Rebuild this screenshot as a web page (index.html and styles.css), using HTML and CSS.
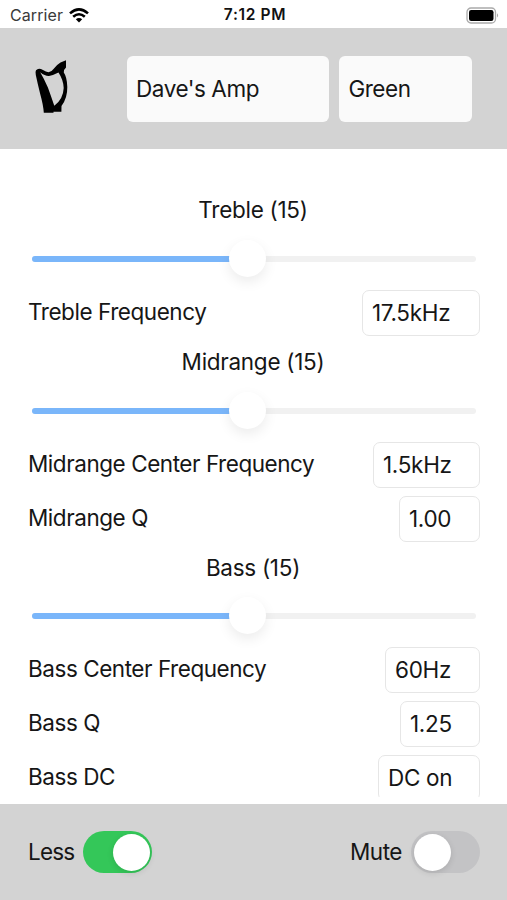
FILE: index.html
```
<!DOCTYPE html>
<html lang="en">
<head>
<meta charset="utf-8">
<title>Dave's Amp</title>
<link rel="stylesheet" href="styles.css">
</head>
<body>
<div class="status">
  <div class="carrier"><span>Carrier</span>
    <svg width="20" height="15" viewBox="0 0 20 15" fill="none" stroke="#000" stroke-width="2.6"><path d="M1 5.4Q10-2.6 19 5.4M4.2 8.8Q10 3.7 15.8 8.8"/><path d="M6.8 11.2Q10 8.7 13.2 11.2L10 14.5Z" fill="#000" stroke="none"/></svg>
  </div>
  <div class="time">7:12 PM</div>
  <svg class="battery" width="34" height="17" viewBox="0 0 34 17"><rect x="1" y="1" width="28.5" height="15" rx="4" fill="#fff" stroke="#aaa" stroke-width="1.3"/><rect x="3" y="3" width="24.5" height="11" rx="2.2"/><path d="M31 6.2Q33.2 8.3 31 10.6Z" fill="#aaa"/></svg>
</div>
<header class="header">
  <svg class="harp" width="34" height="54" viewBox="0 0 34 54"><path fill-rule="evenodd" d="M31 .3L25.5 2.5Q22 4.5 19 8.5Q16.5 12 13.5 12.2Q11 12 8 10Q3.5 7.2 1 10.2Q0 12 .8 15Q2.5 23 5.2 34Q8.3 45 8.8 52.8H18.5V51.8H26.4L26.5 46Q32.5 38 32.3 27Q32 17 28.8 12.5Q28.6 9.5 31 7.5ZM5.2 12.2Q10 16.2 14 16Q18 15.2 23.5 12.4Q28.5 20 28.7 28Q28.3 39 19.3 45.8Q16 36 12.9 27.5Q9 18.5 5.2 12.2Z"/></svg>
  <div class="field name"><span>Dave's Amp</span></div>
  <div class="field preset"><span>Green</span></div>
</header>
<main class="controls">
  <section>
    <h2>Treble (15)</h2>
    <div class="slider"><div class="track"><div class="fill"></div><div class="thumb"></div></div></div>
    <div class="row"><span class="label">Treble Frequency</span><span class="value w118">17.5kHz</span></div>
  </section>
  <section>
    <h2>Midrange (15)</h2>
    <div class="slider"><div class="track"><div class="fill"></div><div class="thumb"></div></div></div>
    <div class="row"><span class="label">Midrange Center Frequency</span><span class="value w107">1.5kHz</span></div>
    <div class="row"><span class="label">Midrange Q</span><span class="value w81">1.00</span></div>
  </section>
  <section class="bass">
    <h2>Bass (15)</h2>
    <div class="slider"><div class="track"><div class="fill"></div><div class="thumb"></div></div></div>
    <div class="row"><span class="label">Bass Center Frequency</span><span class="value w95">60Hz</span></div>
    <div class="row"><span class="label">Bass Q</span><span class="value w80">1.25</span></div>
    <div class="row"><span class="label">Bass DC</span><span class="value w102">DC on</span></div>
  </section>
</main>
<footer class="footer">
  <div class="option less"><span>Less</span><div class="switch on"><div class="knob"></div></div></div>
  <div class="option"><span>Mute</span><div class="switch"><div class="knob"></div></div></div>
</footer>
</body>
</html>
```
FILE: styles.css
```
* { box-sizing: border-box; }
body {
  margin: 0;
  height: 900px;
  overflow: hidden;
  background: #fff;
  color: #161616;
  font: 22.5px/28px Inter, "Liberation Sans", sans-serif;
  letter-spacing: -0.45px;
  white-space: nowrap;
}
.status {
  height: 28px;
  padding: 2px 7px 0 10px;
  display: grid;
  grid-template-columns: 1fr auto 1fr;
  align-items: center;
  font-size: 16px;
  line-height: 24px;
  letter-spacing: 0.1px;
}
.carrier { display: flex; align-items: center; gap: 6px; color: #3a3a3a; }
.time {
  font-weight: 600;
  font-size: 15.5px;
  letter-spacing: 0.65px;
  color: #111;
}
.battery { justify-self: end; }
.header {
  height: 121px;
  padding: 28px 35px 27px;
  display: flex;
  background: #d3d3d3;
}
.harp { margin: 4px 58px 0 0; flex: none; }
.field {
  height: 66px;
  padding-left: 9px;
  display: flex;
  align-items: center;
  background: #fafafa;
  border-radius: 6px;
}
.name { width: 203px; margin-right: 10px; }
.preset { width: 133px; }
.controls {
  height: 648px;
  padding: 35px 27px 0 28px;
  overflow: hidden;
}
h2 {
  margin: 0;
  height: 52px;
  padding-right: 2px;
  font: inherit;
  line-height: 52px;
  letter-spacing: -0.28px;
  text-align: center;
}
.bass h2 { height: 51px; line-height: 51px; }
.slider { height: 46px; padding: 20px 4px; }
.track {
  position: relative;
  height: 6px;
  border-radius: 3px;
  background: #f1f1f1;
}
.fill { width: 48.5%; height: 6px; border-radius: 3px; background: #7ab6fa; }
.thumb {
  position: absolute;
  left: 197px;
  top: -16px;
  width: 37px;
  height: 37px;
  border-radius: 50%;
  background: #fff;
  box-shadow: 0 5px 13px rgba(0, 0, 0, .08);
}
.row {
  height: 46px;
  margin-top: 8px;
  display: flex;
  justify-content: space-between;
}
.label { line-height: 44px; }
.value {
  height: 46px;
  padding-left: 9px;
  border: 1.5px solid #e6e6e6;
  border-radius: 7px;
  line-height: 44px;
  letter-spacing: -0.3px;
}
.w118 { width: 118px; }
.w107 { width: 107px; }
.w102 { width: 102px; }
.w95 { width: 95px; }
.w81 { width: 81px; }
.w80 { width: 80px; }
.footer {
  height: 96px;
  margin-top: 7px;
  padding: 0 27px 0 28px;
  display: flex;
  align-items: center;
  justify-content: space-between;
  background: #d3d3d3;
}
.option { display: flex; align-items: center; gap: 9px; }
.less { letter-spacing: -0.8px; }
.switch {
  width: 69px;
  height: 42px;
  padding: 2.5px;
  display: flex;
  border-radius: 21px;
  background: #c3c3c5;
}
.on { justify-content: flex-end; background: #34c759; }
.knob {
  width: 37px;
  height: 37px;
  border-radius: 50%;
  background: #fff;
  box-shadow: 0 2px 6px rgba(0, 0, 0, .12);
}
```
